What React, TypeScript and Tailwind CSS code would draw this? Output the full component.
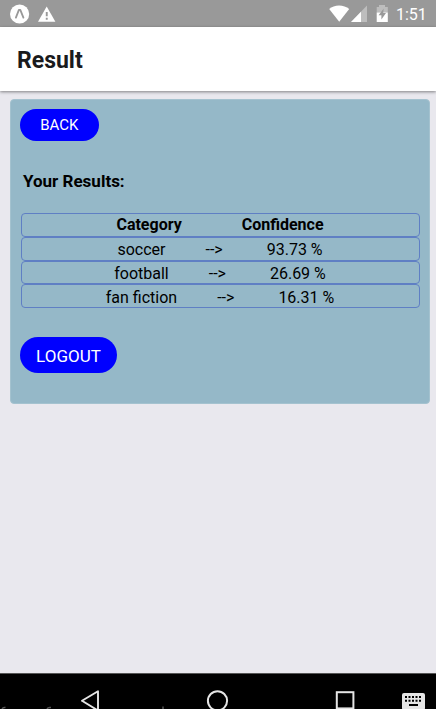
import React from 'react';

const results = [
  { category: 'soccer', confidence: '93.73 %' },
  { category: 'football', confidence: '26.69 %' },
  { category: 'fan fiction', confidence: '16.31 %' },
];

function StatusBar() {
  return (
    <div className="flex h-[27px] shrink-0 items-center bg-[#999999] text-white">
      <svg className="ml-[10px] h-5 w-5" viewBox="0 0 20 20">
        <circle cx="9.6" cy="10" r="9.6" fill="#fff" />
        <path d="M5.9 13.6 L8.9 5.9 H10.3 L13.4 13.6" fill="none" stroke="#999" strokeWidth="1.8" strokeLinejoin="round" strokeLinecap="round" />
      </svg>
      <svg className="ml-[7px] h-5 w-5" viewBox="0 0 20 20">
        <path d="M9.7 2.4 L18.4 17.7 H1Z" fill="#fff" />
        <path d="M8.8 8h1.9v4.2H8.8zM8.8 13.8h1.9v1.9H8.8z" fill="#999" />
      </svg>
      <div className="flex-1" />
      <svg className="h-[27px] w-[60px]" viewBox="0 0 60 27">
        <path d="M0.2 8.9 C5 4.2 15 4.2 20.2 8.9 L10.2 21.7Z" fill="#fff" />
        <path d="M38 5.6V22H22Z" fill="#bdbdbd" />
        <path d="M32 11.8V22H22Z" fill="#fff" />
        <path d="M47.7 7H50V5H56V7H58.8V13H47.7Z" fill="#bdbdbd" />
        <path d="M47.7 12.6H58.8V22H47.7Z" fill="#fff" />
        <path d="M54.7 8.5L49.6 15.2H52.4V19.5L57 12.9H54.2Z" fill="#999" />
      </svg>
      <span className="mr-[9px] ml-[7px] w-[31px] whitespace-nowrap pt-[2px] text-[16px] leading-5">1:51</span>
    </div>
  );
}

function NavigationBar() {
  return (
    <div className="h-9 shrink-0 overflow-hidden border-t border-[#555] bg-black">
      <svg className="block h-[35px] w-[436px]" viewBox="0 674 436 35" fill="none" stroke="#e5e5e5">
        <path d="M98 691.2V710.5L82 700.8Z" strokeWidth="1.9" strokeLinejoin="round" />
        <circle cx="217.5" cy="700.8" r="9.6" strokeWidth="2" />
        <rect x="336.8" y="692.2" width="16.6" height="16.2" strokeWidth="2" />
        <rect x="402" y="693" width="23" height="17" rx="2" fill="#e5e5e5" stroke="none" />
        <path d="M405 697H421M405 700.8H421" stroke="#000" strokeWidth="1.9" strokeDasharray="2 1.5" />
        <path d="M409 705H418" stroke="#000" strokeWidth="2" />
        <path d="M2 709Q3 707 5.5 707.6M47 709Q48 707 51 707.6M163 706.5V709" stroke="#555" strokeWidth="1.5" />
      </svg>
    </div>
  );
}

const rowClass = 'flex h-[23.8px] items-center justify-center whitespace-pre rounded-[4px] border border-[#5f7fc4] pr-px text-[16px] leading-[22px] text-black';

export default function App() {
  return (
    <div className="flex h-[709px] w-[436px] flex-col overflow-hidden bg-[#e9e8ee] font-[Roboto,sans-serif]">
      <StatusBar />
      <header className="flex h-16 shrink-0 items-center bg-white pl-[17px] pt-[3px] shadow-[0_1px_3px_rgba(0,0,0,0.45)]">
        <h1 className="text-[23px] leading-7 font-bold text-[#1a1a1c]">Result</h1>
      </header>
      <main className="flex-1 pt-2 pl-[10px]">
        <section className="flex h-[305px] w-[420px] flex-col items-start rounded-[4px] border border-[#a4c2cf] bg-[#95b8c8] pt-[8.6px] pl-[9px]">
          <button className="h-8 w-[78.5px] rounded-full bg-[#0000ff] pt-px text-[15px] leading-5 text-white">BACK</button>
          <h2 className="mt-[28.4px] ml-[3px] text-[17px] leading-6 font-bold text-black">Your Results:</h2>
          <div className="mt-5 ml-px w-[399px]">
            <div className={rowClass}>
              <span className="font-bold">Category</span>
              <span className="ml-[60px] font-bold">Confidence</span>
            </div>
            {results.map((result) => (
              <div key={result.category} className={rowClass + ' pt-[2.8px]'}>
                <span>{result.category}</span>
                <span className="ml-10">{'-->'}</span>
                <span className="ml-11">{result.confidence}</span>
              </div>
            ))}
          </div>
          <button className="mt-[28.8px] h-9 w-[97px] rounded-full bg-[#0000ff] pt-[2px] text-[17px] leading-6 text-white">LOGOUT</button>
        </section>
      </main>
      <NavigationBar />
    </div>
  );
}
